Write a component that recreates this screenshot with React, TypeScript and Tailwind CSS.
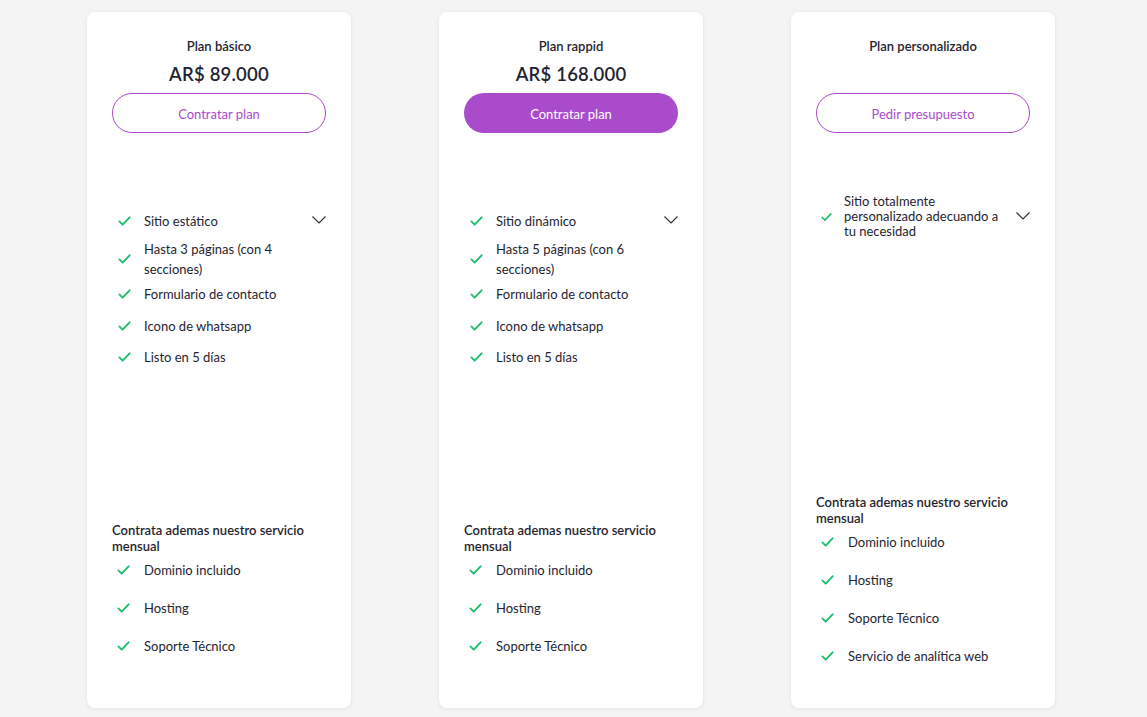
const font = { fontFamily: "Lato, 'Open Sans', sans-serif" };

function Check({ small = false }: { small?: boolean }) {
  return (
    <svg width={small ? 11 : 13} height={small ? 10 : 12} viewBox="0 0 14 12" className="shrink-0">
      <path d="M1.5 6.5 L5 10 L12.5 2" fill="none" stroke="#1fbf6a" strokeWidth="2" strokeLinecap="round" strokeLinejoin="round" />
    </svg>
  );
}

function Chevron() {
  return (
    <svg width="16" height="10" viewBox="0 0 16 10" className="shrink-0">
      <path d="M1.5 1.5 L8 8 L14.5 1.5" fill="none" stroke="#333" strokeWidth="1.2" />
    </svg>
  );
}

function Item({ text, className = "" }: { text: string; className?: string }) {
  return (
    <li className={"flex items-center gap-[14px] pl-[5px] " + className}>
      <Check />
      <span className="leading-[20px]">{text}</span>
    </li>
  );
}

type Plan = {
  name: string;
  price?: string;
  cta: string;
  filled?: boolean;
  features: string[];
  extras: string[];
  featTop: string;
  extraTop: string;
};

const featGaps = ["", "mt-[8px]", "mt-[5px]", "mt-[12px]", "mt-[11px]"];

const plans: Plan[] = [
  {
    name: "Plan básico",
    price: "AR$ 89.000",
    cta: "Contratar plan",
    features: ["Sitio estático", "Hasta 3 páginas (con 4 secciones)", "Formulario de contacto", "Icono de whatsapp", "Listo en 5 días"],
    extras: ["Dominio incluido", "Hosting", "Soporte Técnico"],
    featTop: "mt-[78px]",
    extraTop: "mt-[155px]",
  },
  {
    name: "Plan rappid",
    price: "AR$ 168.000",
    cta: "Contratar plan",
    filled: true,
    features: ["Sitio dinámico", "Hasta 5 páginas (con 6 secciones)", "Formulario de contacto", "Icono de whatsapp", "Listo en 5 días"],
    extras: ["Dominio incluido", "Hosting", "Soporte Técnico"],
    featTop: "mt-[78px]",
    extraTop: "mt-[155px]",
  },
  {
    name: "Plan personalizado",
    cta: "Pedir presupuesto",
    features: ["Sitio totalmente personalizado adecuando a tu necesidad"],
    extras: ["Dominio incluido", "Hosting", "Soporte Técnico", "Servicio de analítica web"],
    featTop: "mt-[61px]",
    extraTop: "mt-[255px]",
  },
];

function Card({ plan, idx }: { plan: Plan; idx: number }) {
  const custom = idx === 2;
  const feature = (f: string, i: number) => (
    <li key={f} className={"flex items-center " + (custom ? "pl-[5px] " : "pl-[6px] ") + featGaps[i]}>
      <Check small={custom} />
      <span className={custom ? "ml-[12px] w-[162px] leading-[15px]" : "ml-[13px] w-[150px] leading-[20px]"}>{f}</span>
      {i === 0 && (
        <span className={"ml-auto -mr-[1px] " + (custom ? "-mt-[1px]" : "-mt-[3px]")}>
          <Chevron />
        </span>
      )}
    </li>
  );
  return (
    <div className="w-[264px] h-[696px] bg-white rounded-[8px] shadow-[0_1px_4px_rgba(0,0,0,0.08)] px-[25px] pt-[25px] text-[13px] text-[#1f2430]">
      <h3 className="text-center font-semibold leading-[18px]">{plan.name}</h3>
      <div className="h-[28px] flex items-center justify-center mt-[6px] text-[18.5px] font-semibold tracking-[0.2px]">
        {plan.price}
      </div>
      <button
        className={
          "mt-[4px] w-full h-[40px] pt-[3px] rounded-full text-[13px] " +
          (plan.filled ? "bg-[#a94bcb] text-white" : "border border-[#a94bcb] text-[#a94bcb] bg-white")
        }
      >
        {plan.cta}
      </button>
      <ul className={plan.featTop}>{plan.features.map(feature)}</ul>
      <div className={plan.extraTop}>
        <p className="font-semibold leading-[16px] w-[210px]">Contrata ademas nuestro servicio mensual</p>
        <ul className="mt-[6px]">
          {plan.extras.map((e, i) => (
            <Item key={e} text={e} className={i === 0 ? "" : "mt-[18px]"} />
          ))}
        </ul>
      </div>
    </div>
  );
}

export default function App() {
  return (
    <div className="min-h-[717px] bg-[#f4f4f4] pl-[87px] pt-[12px]" style={font}>
      <div className="flex gap-[88px]">
        {plans.map((p, i) => (
          <Card key={p.name} plan={p} idx={i} />
        ))}
      </div>
    </div>
  );
}
